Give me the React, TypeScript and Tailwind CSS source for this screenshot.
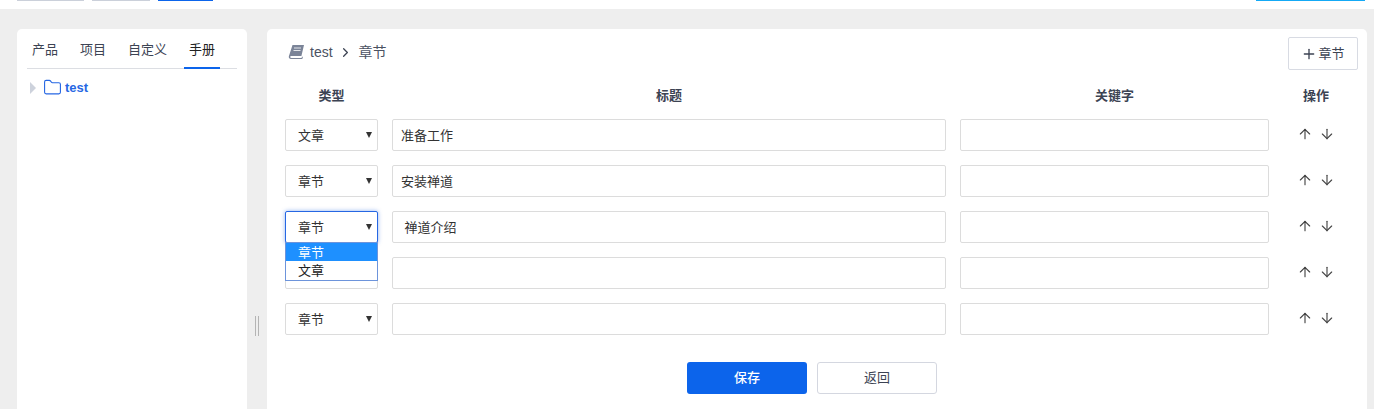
import { ArrowDown, ArrowUp, ChevronRight, Folder, Plus } from "lucide-react";

// row 4's value sits behind the open dropdown, nothing of it shows
const rows = [
  { type: "文章", title: "准备工作" },
  { type: "章节", title: "安装禅道" },
  { type: "章节", title: " 禅道介绍", open: true },
  { type: "", title: "" },
  { type: "章节", title: "" },
];

function Row({ type, title, open }: { type: string; title: string; open?: boolean }) {
  return (
    <div className="flex items-center h-8 mb-3.5">
      <div className="relative w-[93px] h-8 mr-3.5 shrink-0">
        <div
          className={
            open
              ? "flex items-center h-8 pl-3 pr-[5px] pt-[2px] bg-white rounded-[2px] border border-[#2667e3] shadow-[0_0_4px_rgba(38,103,227,0.5)] text-[13px] text-[#333]"
              : "flex items-center h-8 pl-3 pr-[5px] pt-[2px] bg-white rounded-[2px] border border-[#dcdcdc] text-[13px] text-[#333]"
          }
        >
          <span className="flex-1">{type}</span>
          <span className="w-0 h-0 border-x-[3.5px] border-x-transparent border-t-[6px] border-t-[#333] mb-[2px]" />
        </div>
        {open && (
          <div className="absolute z-10 left-0 top-[31px] w-[93px] h-[39px] bg-white border border-[#6d94db] text-[13px] leading-[18px] text-[#222]">
            <div className="h-[18px] pl-3 pt-px bg-[#1e90ff] text-white">章节</div>
            <div className="h-[18px] pl-3 pt-px">文章</div>
          </div>
        )}
      </div>
      <div className="w-[554px] h-8 mr-3.5 shrink-0 flex items-center pl-2 pt-[2px] bg-white rounded-[2px] border border-[#dcdcdc] text-[13px] text-[#333] whitespace-pre">
        {title}
      </div>
      <div className="w-[309px] h-8 shrink-0 bg-white rounded-[2px] border border-[#dcdcdc]" />
      <div className="flex items-center gap-[6px] ml-[28px] mb-[2px] text-[#444]">
        <ArrowUp size={16} strokeWidth={1.7} />
        <ArrowDown size={16} strokeWidth={1.7} />
      </div>
    </div>
  );
}

export default function App() {
  return (
    <div className="w-[1374px] h-[409px] overflow-hidden bg-[#eeeeee] font-['Liberation_Sans','Noto_Sans_CJK_SC',sans-serif]">
      {/* top bar, only the bottom edge of the buttons is in view */}
      <div className="h-[9px] bg-white">
        <div className="flex items-end h-px overflow-hidden pl-[17px] pr-[9px]">
          <div className="w-[67px] h-8 shrink-0 bg-[#cbd0da]" />
          <div className="w-[58px] h-8 shrink-0 ml-2 bg-[#cbd0da]" />
          <div className="w-[55px] h-8 shrink-0 ml-2 bg-[#0c64eb]" />
          <div className="w-[109px] h-8 shrink-0 ml-auto bg-[#14a9f5]" />
        </div>
      </div>

      <div className="flex items-start pt-5 pl-[17px]">
        {/* left tree panel */}
        <div className="w-[230px] h-[400px] shrink-0 bg-white rounded-t-[5px] px-[10px] pt-2">
          <div className="flex h-[32px] border-b border-[#dcdee3] text-[13px] text-[#3c4353]">
            <div className="w-[53px] pl-[5px] pt-[3px]">产品</div>
            <div className="w-[48px] pt-[3px]">项目</div>
            <div className="w-[56px] pt-[3px]">自定义</div>
            <div className="w-[36px] h-[32px] pt-[3px] text-center text-[#222] border-b-2 border-[#0c64eb]">手册</div>
          </div>
          <div className="flex items-center mt-[9px] pl-[3px]">
            <span className="w-0 h-0 border-y-[6px] border-y-transparent border-l-[6px] border-l-[#cdd2dc] mr-[7px]" />
            <Folder size={19} strokeWidth={1.4} className="text-[#2667e3] mr-[3px]" />
            <span className="text-[13px] font-bold text-[#2667e3]">test</span>
          </div>
        </div>

        {/* splitter */}
        <div className="w-[20px] h-[400px] shrink-0 flex justify-center gap-[2px] pt-[287px]">
          <div className="w-px h-5 bg-[#b4b4b4]" />
          <div className="w-px h-5 bg-[#b4b4b4]" />
        </div>

        {/* chapter form */}
        <div className="relative w-[1100px] h-[400px] shrink-0 bg-white rounded-t-[5px] pl-[18px] pt-[14px]">
          <div className="flex items-center h-[18px] text-sm text-[#4b5262]">
            <svg width="17" height="16" viewBox="0 0 17 16" className="ml-[3px] mr-[5px] shrink-0">
              <path d="M4.5 1h11.5l-2.6 11H3.2c-1 0-1.2.8-1 1.2.2.5.6.8 1.2.8h10.2l.4-1.4.9.3-.6 2.1H3C1.500 15 .6 14 .8 12.500z" fill="#7b8498" />
              <path d="M6 4h7M5.500 6.500h7" stroke="#fff" strokeWidth="0.8" />
            </svg>
            <span>test</span>
            <ChevronRight size={15} strokeWidth={2} className="ml-[5px] mr-[6px] text-[#3c4353]" />
            <span>章节</span>
          </div>
          <div className="absolute top-2 right-[9px] flex items-center justify-center w-[70px] h-[33px] rounded-[2px] border border-[#d8dbe3] text-[13px] text-[#3c4353]">
            <Plus size={16} strokeWidth={2} className="mr-[1px]" />
            章节
          </div>

          <div className="flex items-center h-[22px] mt-[24px] mb-[12px] text-[13px] font-bold text-[#3c4353]">
            <div className="w-[93px] mr-3.5 text-center">类型</div>
            <div className="w-[554px] mr-3.5 text-center">标题</div>
            <div className="w-[309px] text-center">关键字</div>
            <div className="ml-[34px]">操作</div>
          </div>

          {rows.map((row, i) => (
            <Row key={i} {...row} />
          ))}

          <div className="flex justify-center gap-2.5 mt-[27px] pr-7">
            <div className="flex items-center justify-center w-[120px] h-8 rounded-[3px] bg-[#0c64eb] text-[13px] font-medium text-white">保存</div>
            <div className="flex items-center justify-center w-[120px] h-8 rounded-[3px] border border-[#d4d7e0] bg-white text-[13px] text-[#3c4353]">返回</div>
          </div>
        </div>
      </div>
    </div>
  );
}
